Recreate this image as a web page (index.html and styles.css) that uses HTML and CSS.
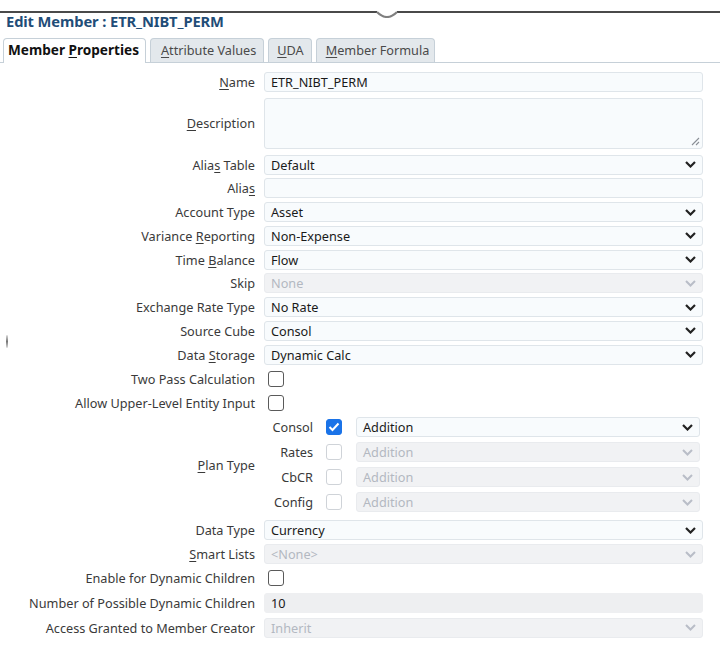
FILE: index.html
```html
<!DOCTYPE html>
<html lang="en">
<head>
<meta charset="utf-8">
<title>Edit Member</title>
<link rel="stylesheet" href="styles.css">
</head>
<body>
<svg class="topbar" width="720" height="18" viewBox="0 0 720 18">
  <path d="M0 12 H377 M397 12 H720" stroke="#4a4a4a" stroke-width="2" fill="none"/>
  <path d="M377 12 Q387 22 397 12" stroke="#808080" stroke-width="2.2" fill="none"/>
</svg>
<h1 class="title">Edit Member : ETR_NIBT_PERM</h1>
<div class="tabs">
  <div class="tab active">Member <u>P</u>roperties</div>
  <div class="tab t2"><u>A</u>ttribute Values</div>
  <div class="tab t3"><u>U</u>DA</div>
  <div class="tab t4"><u>M</u>ember Formula</div>
</div>
<span class="edge-mark"></span>
<div class="form">
  <div class="row"><label class="lbl"><u>N</u>ame</label><div class="field">ETR_NIBT_PERM</div></div>
  <div class="row tall"><label class="lbl"><u>D</u>escription</label>
    <div class="field area"><svg class="grip" width="10" height="10" viewBox="0 0 10 10"><path d="M9 2 L2 9 M9 6 L6 9" stroke="#8a8f96" stroke-width="1.1"/></svg></div></div>
  <div class="row"><label class="lbl">Alia<u>s</u> Table</label><div class="field select"><span>Default</span><svg class="chev" width="11" height="7" viewBox="0 0 11 7"><path d="M1 1 L5.5 5.5 L10 1" stroke="#222" stroke-width="2.2" fill="none"/></svg></div></div>
  <div class="row"><label class="lbl">Alia<u>s</u></label><div class="field"></div></div>
  <div class="row"><label class="lbl">Account Type</label><div class="field select"><span>Asset</span><svg class="chev" width="11" height="7" viewBox="0 0 11 7"><path d="M1 1 L5.5 5.5 L10 1" stroke="#222" stroke-width="2.2" fill="none"/></svg></div></div>
  <div class="row"><label class="lbl">Variance <u>R</u>eporting</label><div class="field select"><span>Non-Expense</span><svg class="chev" width="11" height="7" viewBox="0 0 11 7"><path d="M1 1 L5.5 5.5 L10 1" stroke="#222" stroke-width="2.2" fill="none"/></svg></div></div>
  <div class="row"><label class="lbl">Time <u>B</u>alance</label><div class="field select"><span>Flow</span><svg class="chev" width="11" height="7" viewBox="0 0 11 7"><path d="M1 1 L5.5 5.5 L10 1" stroke="#222" stroke-width="2.2" fill="none"/></svg></div></div>
  <div class="row"><label class="lbl">Skip</label><div class="field select disabled"><span>None</span><svg class="chev" width="11" height="7" viewBox="0 0 11 7"><path d="M1 1 L5.5 5.5 L10 1" stroke="#b9bdc7" stroke-width="2" fill="none"/></svg></div></div>
  <div class="row"><label class="lbl">Exchange Rate Type</label><div class="field select"><span>No Rate</span><svg class="chev" width="11" height="7" viewBox="0 0 11 7"><path d="M1 1 L5.5 5.5 L10 1" stroke="#222" stroke-width="2.2" fill="none"/></svg></div></div>
  <div class="row"><label class="lbl">Source Cube</label><div class="field select"><span>Consol</span><svg class="chev" width="11" height="7" viewBox="0 0 11 7"><path d="M1 1 L5.5 5.5 L10 1" stroke="#222" stroke-width="2.2" fill="none"/></svg></div></div>
  <div class="row"><label class="lbl">Data <u>S</u>torage</label><div class="field select"><span>Dynamic Calc</span><svg class="chev" width="11" height="7" viewBox="0 0 11 7"><path d="M1 1 L5.5 5.5 L10 1" stroke="#222" stroke-width="2.2" fill="none"/></svg></div></div>
  <div class="row check"><label class="lbl">Two Pass Calculation</label><div><span class="box"></span></div></div>
  <div class="row check"><label class="lbl">Allow Upper-Level Entity Input</label><div><span class="box"></span></div></div>
  <div class="row plan"><label class="lbl"><u>P</u>lan Type</label>
    <div class="plan-grid">
      <span class="plbl">Consol</span>
      <span class="box on"><svg width="12" height="10" viewBox="0 0 12 10"><path d="M1.5 5 L4.5 8 L10.5 1.5" stroke="#fff" stroke-width="2" fill="none"/></svg></span>
      <div class="field select"><span>Addition</span><svg class="chev" width="11" height="7" viewBox="0 0 11 7"><path d="M1 1 L5.5 5.5 L10 1" stroke="#222" stroke-width="2.2" fill="none"/></svg></div>
      <span class="plbl">Rates</span>
      <span class="box off"></span>
      <div class="field select disabled"><span>Addition</span><svg class="chev" width="11" height="7" viewBox="0 0 11 7"><path d="M1 1 L5.5 5.5 L10 1" stroke="#b9bdc7" stroke-width="2" fill="none"/></svg></div>
      <span class="plbl">CbCR</span>
      <span class="box off"></span>
      <div class="field select disabled"><span>Addition</span><svg class="chev" width="11" height="7" viewBox="0 0 11 7"><path d="M1 1 L5.5 5.5 L10 1" stroke="#b9bdc7" stroke-width="2" fill="none"/></svg></div>
      <span class="plbl">Config</span>
      <span class="box off"></span>
      <div class="field select disabled"><span>Addition</span><svg class="chev" width="11" height="7" viewBox="0 0 11 7"><path d="M1 1 L5.5 5.5 L10 1" stroke="#b9bdc7" stroke-width="2" fill="none"/></svg></div>
    </div>
  </div>
  <div class="row"><label class="lbl">Data Type</label><div class="field select"><span>Currency</span><svg class="chev" width="11" height="7" viewBox="0 0 11 7"><path d="M1 1 L5.5 5.5 L10 1" stroke="#222" stroke-width="2.2" fill="none"/></svg></div></div>
  <div class="row"><label class="lbl"><u>S</u>mart Lists</label><div class="field select disabled"><span>&lt;None&gt;</span><svg class="chev" width="11" height="7" viewBox="0 0 11 7"><path d="M1 1 L5.5 5.5 L10 1" stroke="#b9bdc7" stroke-width="2" fill="none"/></svg></div></div>
  <div class="row check"><label class="lbl">Enable for Dynamic Children</label><div><span class="box"></span></div></div>
  <div class="row num"><label class="lbl">Number of Possible Dynamic Children</label><div class="field readonly">10</div></div>
  <div class="row"><label class="lbl">Access Granted to Member Creator</label><div class="field select disabled"><span>Inherit</span><svg class="chev" width="11" height="7" viewBox="0 0 11 7"><path d="M1 1 L5.5 5.5 L10 1" stroke="#b9bdc7" stroke-width="2" fill="none"/></svg></div></div>
</div>
</body>
</html>
```
FILE: styles.css
```css
* { box-sizing: border-box; }
body {
  margin: 0;
  width: 720px;
  height: 648px;
  overflow: hidden;
  background: #fff;
  font-family: "Noto Sans", "Open Sans", sans-serif;
  font-size: 12.7px;
  color: #333;
  position: relative;
}
u { text-decoration: underline; text-underline-offset: 2px; }
.topbar { display: block; }
.title {
  margin: -5px 0 0 6px;
  font-size: 14.7px;
  line-height: 16px;
  font-weight: bold;
  color: #1f4d78;
  letter-spacing: -0.1px;
}
.tabs {
  margin-top: 9px;
  display: flex;
  align-items: flex-end;
  gap: 4px;
  padding-left: 3px;
  border-bottom: 1px solid #c6d0d8;
  height: 25px;
}
.tab {
  height: 24px;
  line-height: 22px;
  padding: 0 7px 0 10px;
  border: 1px solid #c6d0d8;
  border-bottom: none;
  border-radius: 4px 4px 0 0;
  background: #e3e8ec;
  color: #4a4a4a;
  font-size: 12.7px;
}
.tab.active {
  background: #fff;
  color: #111;
  font-weight: bold;
  font-size: 13.6px;
  padding: 0 6px 0 4px;
  height: 25px;
  margin-bottom: -1px;
}
.tab.t3 { padding: 0 7px 0 8px; }
.tab.t4 { padding: 0 5px 0 9px; }
.form { margin-top: 7px; }
.row {
  display: grid;
  grid-template-columns: 255px 439px;
  column-gap: 9px;
  align-items: center;
  min-height: 23.75px;
}
.row.tall { min-height: 59px; }
.row.check { min-height: 24.3px; }
.row.plan { padding: 2px 0 6.5px; }
.row.num { min-height: 25.5px; }
.lbl {
  text-align: right;
  color: #3a3a3a;
  white-space: nowrap;
}
.field {
  height: 20px;
  border: 1px solid #dfe5ea;
  border-radius: 3px;
  background: #f8fbfd;
  color: #1a1a1a;
  padding: 0 6px;
  line-height: 18px;
  display: flex;
  align-items: center;
  justify-content: space-between;
}
.field.area {
  height: 51px;
  position: relative;
}
.grip { position: absolute; right: 2px; bottom: 2px; }
.field.disabled {
  background: #f1f2f4;
  border-color: #e9ebee;
  color: #b3b8c1;
}
.field.readonly {
  background: #eeeff1;
  border-color: #eeeff1;
  color: #1a1a1a;
}
.chev { flex: none; }
.box {
  display: block;
  width: 16px;
  height: 16px;
  margin-left: 4px;
  border: 1.5px solid #5a5a5a;
  border-radius: 3px;
  background: #fff;
}
.plan-grid {
  display: grid;
  grid-template-columns: 49px 16px 1fr;
  column-gap: 13px;
  row-gap: 5px;
  grid-auto-rows: 20px;
  align-items: center;
  padding-right: 3px;
}
.plan-grid .field { margin-left: 1px; }
.plbl { text-align: right; color: #3a3a3a; }
.box.on {
  margin: 0;
  background: #1a73e8;
  border-color: #1a73e8;
  display: flex;
  align-items: center;
  justify-content: center;
}
.box.off {
  margin: 0;
  border: 1px solid #cfd3d8;
}
.edge-mark {
  position: absolute;
  left: 6px;
  top: 335px;
  width: 2px;
  height: 13px;
  border-radius: 1px;
  background: linear-gradient(#ddd, #777 50%, #ddd);
}
```
